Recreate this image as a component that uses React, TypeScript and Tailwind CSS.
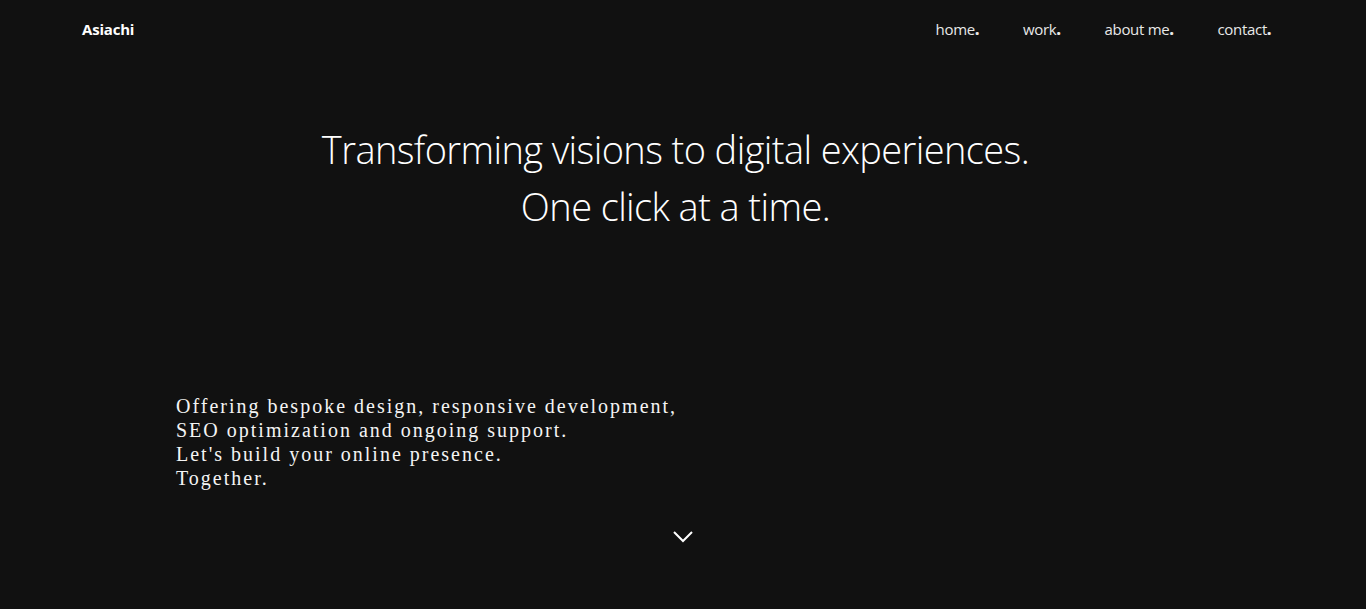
import React from "react";

const navLinks = ["home", "work", "about me", "contact"];

export default function App() {
    return (
        <div className="min-h-[3000px] bg-[#111111] text-white">
            <header className="flex items-center justify-between pl-[82px] pr-[95px] h-[58px]">
                <span className="text-[15px] font-bold font-['Open_Sans',sans-serif] tracking-[-0.2px]">
                    Asiachi
                </span>
                <nav className="flex items-center gap-[44px] font-['Open_Sans',sans-serif] text-[15px] text-[#e8e8e8] tracking-[-0.3px]">
                    {navLinks.map((l) => (
                        <a key={l} href="#" className="hover:text-white">
                            {l}
                            <span className="font-extrabold">.</span>
                        </a>
                    ))}
                </nav>
            </header>

            <section className="flex flex-col h-[551px]">
                <h1 className="mt-[63px] pr-[15px] text-center font-['Open_Sans',sans-serif] font-light text-[38px] leading-[57px] tracking-[-0.6px]">
                    Transforming visions to digital experiences.
                    <br />
                    One click at a time.
                </h1>

                <p className="mt-[159px] ml-[176px] font-['Liberation_Serif',serif] text-[20px] leading-[24px] tracking-[2px] text-[#f4f4f4]">
                    Offering bespoke design, responsive development,
                    <br />
                    SEO optimization and ongoing support.
                    <br />
                    Let's build your online presence.
                    <br />
                    Together.
                </p>

                <div className="mt-[41px] flex justify-center">
                    <svg
                        className="w-5 h-3"
                        viewBox="0 0 20 12"
                        fill="none"
                        stroke="currentColor"
                        strokeWidth={2}
                    >
                        <path d="M1 1l9 9 9-9" />
                    </svg>
                </div>
            </section>
        </div>
    );
}
